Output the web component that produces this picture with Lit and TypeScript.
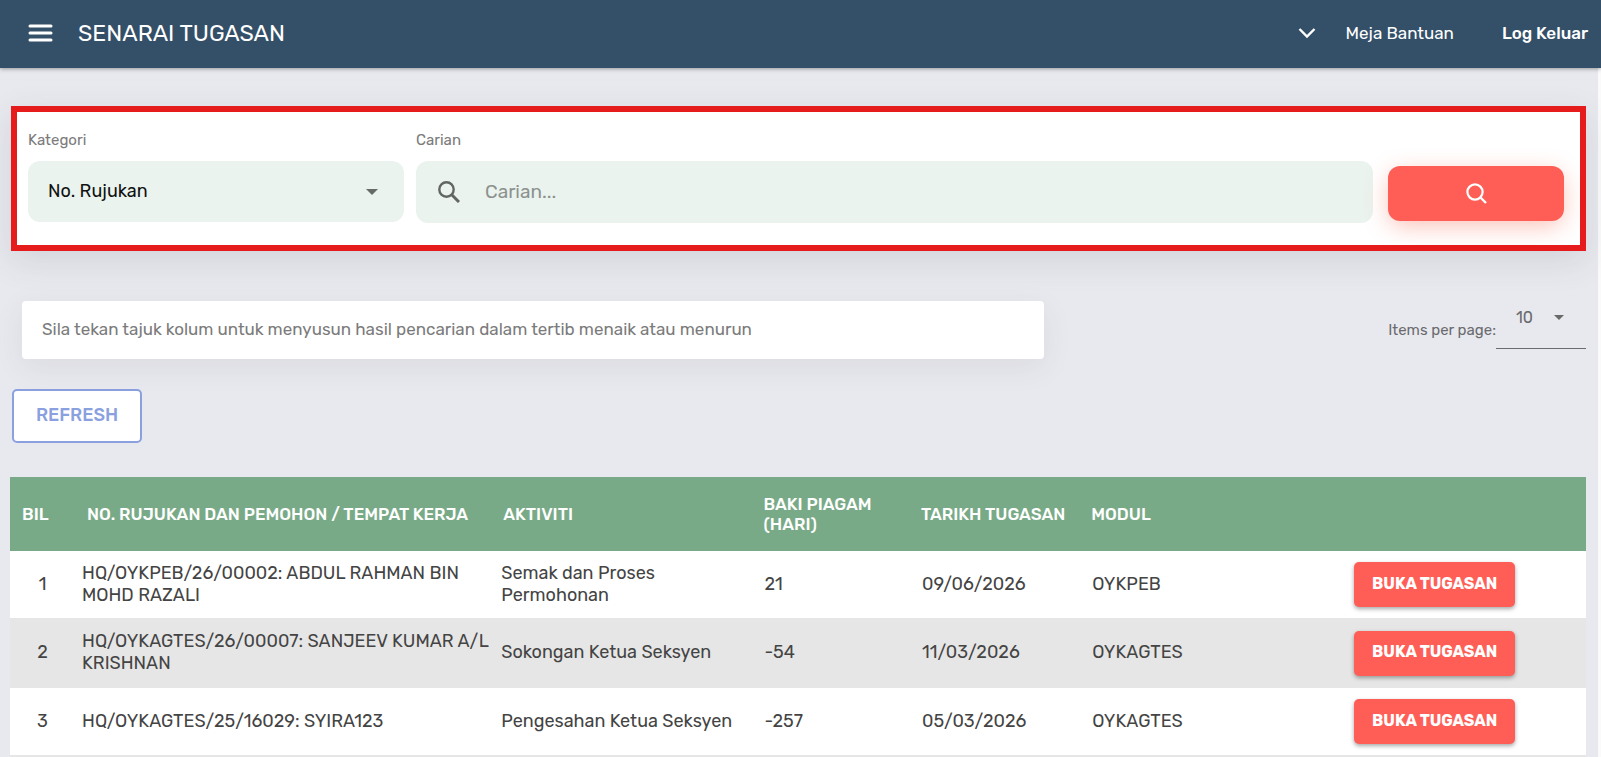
import { LitElement, html, css } from "lit";
import { customElement, state } from "lit/decorators.js";

interface Task {
  ref: string;
  activity: string;
  days: number;
  date: string;
  module: string;
}

const TASKS: Task[] = [
  { ref: "HQ/OYKPEB/26/00002: ABDUL RAHMAN BIN MOHD RAZALI", activity: "Semak dan Proses Permohonan", days: 21, date: "09/06/2026", module: "OYKPEB" },
  { ref: "HQ/OYKAGTES/26/00007: SANJEEV KUMAR A/L KRISHNAN", activity: "Sokongan Ketua Seksyen", days: -54, date: "11/03/2026", module: "OYKAGTES" },
  { ref: "HQ/OYKAGTES/25/16029: SYIRA123", activity: "Pengesahan Ketua Seksyen", days: -257, date: "05/03/2026", module: "OYKAGTES" },
];

@customElement("app-root")
export class AppRoot extends LitElement {
  @state() private tasks = TASKS;

  static styles = css`
    :host {
      display: flex;
      flex-direction: column;
      min-height: 100vh;
      background: #e8e9ee;
      font-family: Rubik, Roboto, sans-serif;
      color: #444;
    }
    *, *::before, *::after { box-sizing: border-box; }
    button, input, select { font: inherit; color: inherit; margin: 0; }
    button { cursor: pointer; }
    svg { display: block; }

    .topbar {
      display: flex;
      align-items: center;
      height: 68px;
      padding: 0 13px 2px 28px;
      background: #345068;
      color: #fff;
      box-shadow: 0 1px 4px rgba(0, 0, 0, 0.35);
      position: relative;
    }
    .menu, .expand { border: 0; padding: 0; background: none; }
    .title { margin: 0 0 0 25px; font-size: 23px; font-weight: 400; line-height: 28px; }
    .nav { display: flex; align-items: center; margin-left: auto; font-size: 17px; line-height: 20px; }
    .nav a { color: #fff; text-decoration: none; }
    .help { margin-left: 30px; }
    .logout { margin-left: 48px; font-weight: 500; }

    .page {
      flex: 1;
      padding: 38px 12px 0 10px;
      border-right: 3px solid #fafafa;
    }
    .search {
      display: grid;
      grid-template-columns: 376fr 957fr 179fr;
      column-gap: 12px;
      align-items: start;
      margin-left: 1px;
      height: 145px;
      padding: 18px 16px 0 11px;
      background: #fff;
      border: 6px solid #e61c1c;
      box-shadow: 0 10px 32px rgba(60, 64, 80, 0.12);
    }
    .field { display: grid; row-gap: 11px; }
    .label { font-size: 15px; line-height: 20px; color: #7b7b7b; }
    .select-wrap { position: relative; display: grid; }
    .select-wrap select { appearance: none; border: 0; background: none; outline: 0; }
    .select-wrap svg { position: absolute; pointer-events: none; }
    .category select {
      height: 61px;
      padding: 0 40px 2px 20px;
      border-radius: 12px;
      background: #eaf3ee;
      color: #111;
      font-size: 18px;
    }
    .category svg { right: 26px; top: 28px; }
    .query {
      display: flex;
      align-items: center;
      height: 62px;
      padding: 0 20px 0 22px;
      border-radius: 12px;
      background: #eaf3ee;
    }
    .query input {
      flex: 1;
      min-width: 0;
      margin-left: 25px;
      padding: 0 0 2px;
      border: 0;
      outline: 0;
      background: none;
      font-size: 19px;
    }
    .query input::placeholder { color: #8d928f; opacity: 1; }
    .go {
      display: grid;
      place-items: center;
      height: 55px;
      margin: 36px 0 0 3px;
      border: 0;
      border-radius: 12px;
      background: #ff5e57;
      box-shadow: 0 6px 24px -2px rgba(245, 90, 60, 0.4);
    }

    .toolbar { display: flex; justify-content: space-between; margin: 50px 0 0 12px; }
    .hint {
      flex: 0 1 1022px;
      margin: 0;
      padding: 17px 20px 19px;
      border-radius: 4px;
      background: #fff;
      box-shadow: 0 8px 30px rgba(60, 64, 80, 0.08);
      font-size: 17px;
      line-height: 22px;
      color: #7b7b7b;
    }
    .pager { display: flex; align-items: flex-start; font-size: 15px; color: #6b6b6f; }
    .pager label { line-height: 20px; padding-top: 19px; }
    .per-page { width: 90px; height: 48px; border-bottom: 1px solid #6b6b6f; }
    .per-page select { height: 34px; padding: 0 20px 2px; border-radius: 0; font-size: 16px; }
    .per-page svg { right: 22px; top: 14px; }

    .refresh {
      display: block;
      width: 130px;
      height: 54px;
      margin: 30px 0 34px 2px;
      padding: 0 0 2px;
      border: 2px solid #8aa0df;
      border-radius: 5px;
      background: #fff;
      color: #8aa0df;
      font-size: 18px;
      font-weight: 500;
    }

    .tasks { width: 100%; border-spacing: 0; table-layout: fixed; background: #fff; border-bottom: 2px solid #e6e6e6; }
    .c-bil { width: 4%; }
    .c-ref { width: 26.6%; }
    .c-act { width: 16.7%; }
    .c-day { width: 10%; }
    .c-date { width: 10.8%; }
    .c-mod { width: 12.7%; }
    th {
      height: 74px;
      padding: 0 4px 0 8px;
      background: #79aa87;
      color: #fff;
      text-align: left;
      font-size: 17px;
      font-weight: 500;
      line-height: 20px;
    }
    th.bil { padding-left: 12px; }
    th.ref { padding-left: 14px; }
    th.act { padding-left: 11px; }
    td { height: 67px; padding: 0 0 2px 9px; font-size: 18px; line-height: 22px; }
    tr:nth-child(even) td { height: 70px; background: #e6e6e6; }
    td.bil { padding-left: 2px; text-align: center; }
    td.action { padding: 0; text-align: center; }
    .open {
      width: 161px;
      height: 45px;
      padding: 0 0 2px;
      border: 0;
      border-radius: 5px;
      background: #ff5e57;
      box-shadow: 0 2px 4px rgba(0, 0, 0, 0.35);
      color: #fff;
      font-size: 16px;
      font-weight: 700;
      vertical-align: middle;
    }
  `;

  private caret(width: number) {
    return html`<svg width=${width} height=${width / 2} viewBox="0 0 12 6" aria-hidden="true"><path d="M0 0h12L6 6z" fill="#666b68" /></svg>`;
  }

  render() {
    return html`
      <header class="topbar">
        <button class="menu" aria-label="Menu">
          <svg width="25" height="18" viewBox="0 0 25 18"><path d="M2 2h21M2 9h21M2 16h21" stroke="#fff" stroke-width="3" stroke-linecap="round" /></svg>
        </button>
        <h1 class="title">SENARAI TUGASAN</h1>
        <nav class="nav">
          <button class="expand" aria-label="Profil">
            <svg width="18" height="12" viewBox="0 0 18 12"><path d="M1.500 2l7.500 7.500L16.500 2" fill="none" stroke="#fff" stroke-width="2.400" /></svg>
          </button>
          <a class="help" href="#bantuan">Meja Bantuan</a>
          <a class="logout" href="#keluar">Log Keluar</a>
        </nav>
      </header>
      <main class="page">
        <form class="search" @submit=${(e: Event) => e.preventDefault()}>
          <div class="field">
            <label class="label" for="category">Kategori</label>
            <div class="select-wrap category">
              <select id="category"><option>No. Rujukan</option></select>
              ${this.caret(12)}
            </div>
          </div>
          <div class="field">
            <label class="label" for="query">Carian</label>
            <div class="query">
              <svg width="22" height="22" viewBox="0 0 22 22" fill="none" stroke="#626663" stroke-width="2.400" aria-hidden="true"><circle cx="8.500" cy="8.500" r="7.200" /><path d="M13.500 13.500l7.500 7.500" stroke-width="3" /></svg>
              <input id="query" type="text" placeholder="Carian..." />
            </div>
          </div>
          <button class="go" aria-label="Cari">
            <svg width="21" height="21" viewBox="0 0 21 21" fill="none" stroke="#fff" stroke-width="2.200"><circle cx="9" cy="9" r="7.600" /><path d="M14.500 14.500l5.500 5.500" stroke-width="2.400" /></svg>
          </button>
        </form>

        <div class="toolbar">
          <p class="hint">Sila tekan tajuk kolum untuk menyusun hasil pencarian dalam tertib menaik atau menurun</p>
          <div class="pager">
            <label for="per-page">Items per page:</label>
            <div class="select-wrap per-page">
              <select id="per-page"><option>10</option></select>
              ${this.caret(10)}
            </div>
          </div>
        </div>

        <button class="refresh">REFRESH</button>

        <table class="tasks">
          <colgroup>
            <col class="c-bil" /><col class="c-ref" /><col class="c-act" /><col class="c-day" /><col class="c-date" /><col class="c-mod" /><col />
          </colgroup>
          <thead>
            <tr>
              <th class="bil">BIL</th>
              <th class="ref">NO. RUJUKAN DAN PEMOHON / TEMPAT KERJA</th>
              <th class="act">AKTIVITI</th>
              <th>BAKI PIAGAM (HARI)</th>
              <th>TARIKH TUGASAN</th>
              <th>MODUL</th>
              <th></th>
            </tr>
          </thead>
          <tbody>
            ${this.tasks.map(
              (t, i) => html`<tr>
                <td class="bil">${i + 1}</td>
                <td>${t.ref}</td>
                <td>${t.activity}</td>
                <td>${t.days}</td>
                <td>${t.date}</td>
                <td>${t.module}</td>
                <td class="action"><button class="open">BUKA TUGASAN</button></td>
              </tr>`
            )}
          </tbody>
        </table>
      </main>
    `;
  }
}
